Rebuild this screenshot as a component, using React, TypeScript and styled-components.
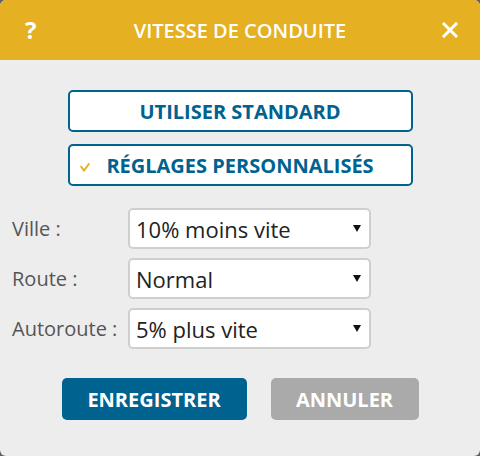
import React, { useState } from 'react';
import styled, { createGlobalStyle } from 'styled-components';

const GlobalStyle = createGlobalStyle`
  html, body {
    margin: 0;
    padding: 0;
    background: #5f5f5f;
  }
  body {
    font-family: "Open Sans", "Liberation Sans", Arial, sans-serif;
  }
`;

const Dialog = styled.div`
  width: 480px;
  height: 456px;
  background: #ededed;
  border-radius: 6px;
  overflow: hidden;
  display: flex;
  flex-direction: column;
`;

const Header = styled.div`
  height: 60px;
  flex-shrink: 0;
  background: #e5b022;
  color: #fff;
  display: grid;
  grid-template-columns: 60px 1fr 60px;
  align-items: center;
`;

const HelpMark = styled.span`
  font-size: 24px;
  font-weight: 700;
  padding-left: 25px;
  line-height: 1;
`;

const Title = styled.h1`
  margin: 0;
  text-align: center;
  font-size: 20px;
  font-weight: 600;
`;

const CloseButton = styled.button`
  justify-self: end;
  margin-right: 21px;
  width: 18px;
  height: 18px;
  padding: 0;
  border: none;
  background: none;
  cursor: pointer;
  display: flex;
  align-items: center;
  justify-content: center;
`;

const Body = styled.div`
  padding-top: 30px;
  display: flex;
  flex-direction: column;
`;

const Choices = styled.div`
  display: flex;
  flex-direction: column;
  align-items: center;
  gap: 12px;
`;

const ChoiceButton = styled.button`
  width: 345px;
  height: 42px;
  box-sizing: border-box;
  border: 2px solid #00628f;
  border-radius: 5px;
  background: #fff;
  color: #00628f;
  font-family: inherit;
  font-size: 20px;
  font-weight: 700;
  padding: 0;
  cursor: pointer;
  display: grid;
  grid-template-columns: 1fr auto 1fr;
  align-items: center;
`;

const CheckSlot = styled.span`
  justify-self: start;
  padding-left: 10px;
  padding-top: 3px;
  display: flex;
`;

const Form = styled.div`
  margin-top: 22px;
  padding-left: 12px;
  display: flex;
  flex-direction: column;
  gap: 9px;
`;

const Row = styled.div`
  display: grid;
  grid-template-columns: 116px 243px;
  align-items: center;
`;

const Label = styled.label`
  font-size: 20px;
  color: #555;
`;

const SelectBox = styled.div`
  height: 41px;
  box-sizing: border-box;
  border: 2px solid #cfcfcf;
  border-radius: 5px;
  background: #fff;
  padding: 0 8px 0 6px;
  display: flex;
  align-items: center;
  justify-content: space-between;
  font-size: 22px;
  color: #222;
  cursor: pointer;
`;

const Actions = styled.div`
  margin-top: 29px;
  display: flex;
  justify-content: center;
  gap: 24px;
`;

const ActionButton = styled.button<{ $primary?: boolean }>`
  height: 42px;
  width: ${(p) => (p.$primary ? '185px' : '148px')};
  border: none;
  border-radius: 5px;
  background: ${(p) => (p.$primary ? '#00628f' : '#aaaaaa')};
  color: #fff;
  font-family: inherit;
  font-size: 20px;
  font-weight: 700;
  cursor: pointer;
`;

const Check = () => (
  <svg width="10" height="10" viewBox="0 0 10 10">
    <polyline points="0.7,4 4,8.6 9.4,1.2" fill="none" stroke="#e5b022" strokeWidth="1.9" />
  </svg>
);

const Cross = () => (
  <svg width="16" height="16" viewBox="0 0 16 16">
    <path d="M2 2 L14 14 M14 2 L2 14" stroke="#fff" strokeWidth="3" strokeLinecap="square" />
  </svg>
);

const Arrow = () => (
  <svg width="8" height="7" viewBox="0 0 8 7">
    <polygon points="0,0 8,0 4,7" fill="#111" />
  </svg>
);

const rows = [
  { label: 'Ville :', value: '10% moins vite' },
  { label: 'Route :', value: 'Normal' },
  { label: 'Autoroute :', value: '5% plus vite' },
];

const App: React.FC = () => {
  const [custom, setCustom] = useState(true);

  return (
    <>
      <GlobalStyle />
      <Dialog>
        <Header>
          <HelpMark>?</HelpMark>
          <Title>VITESSE DE CONDUITE</Title>
          <CloseButton aria-label="Fermer">
            <Cross />
          </CloseButton>
        </Header>
        <Body>
          <Choices>
            <ChoiceButton onClick={() => setCustom(false)}>
              <CheckSlot>{!custom && <Check />}</CheckSlot>
              <span>UTILISER STANDARD</span>
              <span />
            </ChoiceButton>
            <ChoiceButton onClick={() => setCustom(true)}>
              <CheckSlot>{custom && <Check />}</CheckSlot>
              <span>RÉGLAGES PERSONNALISÉS</span>
              <span />
            </ChoiceButton>
          </Choices>
          <Form>
            {rows.map((r) => (
              <Row key={r.label}>
                <Label>{r.label}</Label>
                <SelectBox>
                  <span>{r.value}</span>
                  <Arrow />
                </SelectBox>
              </Row>
            ))}
          </Form>
          <Actions>
            <ActionButton $primary>ENREGISTRER</ActionButton>
            <ActionButton>ANNULER</ActionButton>
          </Actions>
        </Body>
      </Dialog>
    </>
  );
};

export default App;
